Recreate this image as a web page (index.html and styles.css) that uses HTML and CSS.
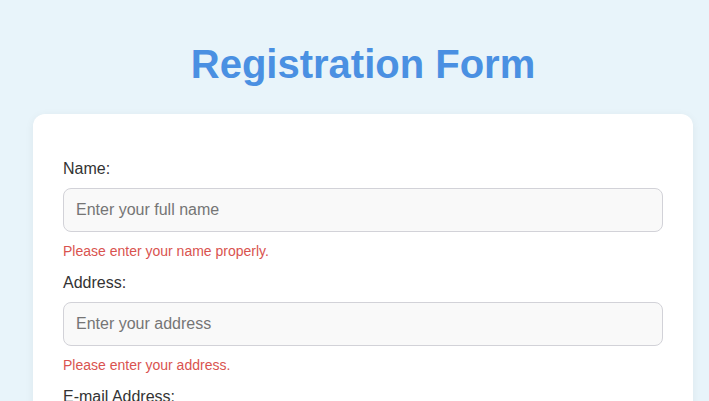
FILE: index.html
```html
<!DOCTYPE html>
<html lang="en">
<head>
<meta charset="utf-8">
<title>Registration Form</title>
<link rel="stylesheet" href="styles.css">
</head>
<body>
<main class="page">
  <h1 class="title">Registration Form</h1>
  <form class="card">
    <div class="group">
      <label class="label" for="name">Name:</label>
      <input class="field" id="name" type="text" placeholder="Enter your full name">
      <div class="error">Please enter your name properly.</div>
    </div>
    <div class="group">
      <label class="label" for="address">Address:</label>
      <input class="field" id="address" type="text" placeholder="Enter your address">
      <div class="error">Please enter your address.</div>
    </div>
    <div class="group">
      <label class="label" for="email">E-mail Address:</label>
      <input class="field" id="email" type="email" placeholder="Enter your e-mail address">
      <div class="error">Please enter a valid e-mail address.</div>
    </div>
  </form>
</main>
</body>
</html>
```

FILE: styles.css
```css
* { box-sizing: border-box; }
html, body { margin: 0; padding: 0; }
body {
  background: #e8f4fa;
  font-family: "Liberation Sans", Arial, sans-serif;
  color: #333;
}
.page {
  display: flex;
  flex-direction: column;
  align-items: center;
  padding: 42px 0 20px 17px;
}
.title {
  margin: 0 0 27px;
  font-size: 40px;
  font-weight: bold;
  color: #4a90e2;
  line-height: normal;
}
.card {
  width: 660px;
  background: #fff;
  border-radius: 12px;
  box-shadow: 0 2px 10px rgba(0, 0, 0, 0.06);
  padding: 46px 30px 30px;
}
.group + .group { margin-top: 15px; }
.label {
  display: block;
  font-size: 16px;
  margin-bottom: 10px;
  color: #333;
}
.field {
  display: block;
  width: 100%;
  padding: 12px;
  font-family: inherit;
  font-size: 16px;
  line-height: normal;
  border: 1px solid #d2d2d8;
  border-radius: 8px;
  background: #f9f9f9;
  color: #333;
}
.field::placeholder { color: #757575; }
.error {
  margin-top: 11px;
  font-size: 14px;
  color: #d9534f;
}
```
